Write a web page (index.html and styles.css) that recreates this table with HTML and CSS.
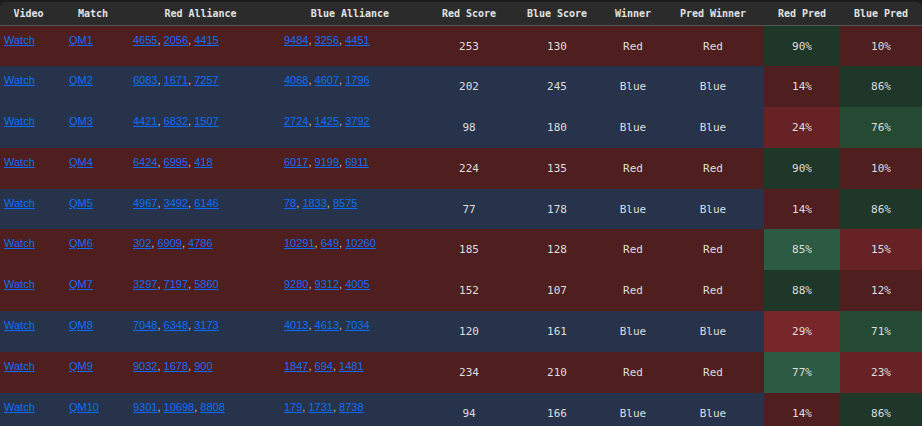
FILE: index.html
```html
<!DOCTYPE html>
<html>
<head>
<title>Match Results</title>
<link rel="stylesheet" href="styles.css">
</head>
<body>

<div class="table-wrap">
  <table class="matches">
    <colgroup>
      <col class="c-video"><col class="c-match"><col class="c-red"><col class="c-blue">
      <col class="c-rscore"><col class="c-bscore"><col class="c-winner"><col class="c-pwinner">
      <col class="c-rpred"><col class="c-bpred">
    </colgroup>
    <thead>
      <tr>
        <th class="lead">Video</th>
        <th class="lead">Match</th>
        <th class="lead">Red Alliance</th>
        <th class="lead">Blue Alliance</th>
        <th>Red Score</th>
        <th>Blue Score</th>
        <th>Winner</th>
        <th>Pred Winner</th>
        <th>Red Pred</th>
        <th>Blue Pred</th>
      </tr>
    </thead>
    <tbody>
      <tr class="red-row">
        <td class="link"><a href="#">Watch</a></td>
        <td class="link"><a href="#">QM1</a></td>
        <td class="link"><a href="#">4655</a>, <a href="#">2056</a>, <a href="#">4415</a></td>
        <td class="link"><a href="#">9484</a>, <a href="#">3256</a>, <a href="#">4451</a></td>
        <td>253</td><td>130</td><td>Red</td><td>Red</td>
        <td class="g1">90%</td><td class="r1">10%</td>
      </tr>
      <tr class="blue-row">
        <td class="link"><a href="#">Watch</a></td>
        <td class="link"><a href="#">QM2</a></td>
        <td class="link"><a href="#">6083</a>, <a href="#">1671</a>, <a href="#">7257</a></td>
        <td class="link"><a href="#">4068</a>, <a href="#">4607</a>, <a href="#">1796</a></td>
        <td>202</td><td>245</td><td>Blue</td><td>Blue</td>
        <td class="r1">14%</td><td class="g1">86%</td>
      </tr>
      <tr class="blue-row">
        <td class="link"><a href="#">Watch</a></td>
        <td class="link"><a href="#">QM3</a></td>
        <td class="link"><a href="#">4421</a>, <a href="#">6832</a>, <a href="#">1507</a></td>
        <td class="link"><a href="#">2724</a>, <a href="#">1425</a>, <a href="#">3792</a></td>
        <td>98</td><td>180</td><td>Blue</td><td>Blue</td>
        <td class="r2">24%</td><td class="g2">76%</td>
      </tr>
      <tr class="red-row">
        <td class="link"><a href="#">Watch</a></td>
        <td class="link"><a href="#">QM4</a></td>
        <td class="link"><a href="#">6424</a>, <a href="#">6995</a>, <a href="#">418</a></td>
        <td class="link"><a href="#">6017</a>, <a href="#">9199</a>, <a href="#">6911</a></td>
        <td>224</td><td>135</td><td>Red</td><td>Red</td>
        <td class="g1">90%</td><td class="r1">10%</td>
      </tr>
      <tr class="blue-row">
        <td class="link"><a href="#">Watch</a></td>
        <td class="link"><a href="#">QM5</a></td>
        <td class="link"><a href="#">4967</a>, <a href="#">3492</a>, <a href="#">6146</a></td>
        <td class="link"><a href="#">78</a>, <a href="#">1833</a>, <a href="#">8575</a></td>
        <td>77</td><td>178</td><td>Blue</td><td>Blue</td>
        <td class="r1">14%</td><td class="g1">86%</td>
      </tr>
      <tr class="red-row">
        <td class="link"><a href="#">Watch</a></td>
        <td class="link"><a href="#">QM6</a></td>
        <td class="link"><a href="#">302</a>, <a href="#">6909</a>, <a href="#">4786</a></td>
        <td class="link"><a href="#">10291</a>, <a href="#">649</a>, <a href="#">10260</a></td>
        <td>185</td><td>128</td><td>Red</td><td>Red</td>
        <td class="g3">85%</td><td class="r2">15%</td>
      </tr>
      <tr class="red-row">
        <td class="link"><a href="#">Watch</a></td>
        <td class="link"><a href="#">QM7</a></td>
        <td class="link"><a href="#">3297</a>, <a href="#">7197</a>, <a href="#">5860</a></td>
        <td class="link"><a href="#">9280</a>, <a href="#">9312</a>, <a href="#">4005</a></td>
        <td>152</td><td>107</td><td>Red</td><td>Red</td>
        <td class="g1">88%</td><td class="r1">12%</td>
      </tr>
      <tr class="blue-row">
        <td class="link"><a href="#">Watch</a></td>
        <td class="link"><a href="#">QM8</a></td>
        <td class="link"><a href="#">7048</a>, <a href="#">6348</a>, <a href="#">3173</a></td>
        <td class="link"><a href="#">4013</a>, <a href="#">4613</a>, <a href="#">7034</a></td>
        <td>120</td><td>161</td><td>Blue</td><td>Blue</td>
        <td class="r3">29%</td><td class="g2">71%</td>
      </tr>
      <tr class="red-row">
        <td class="link"><a href="#">Watch</a></td>
        <td class="link"><a href="#">QM9</a></td>
        <td class="link"><a href="#">9032</a>, <a href="#">1678</a>, <a href="#">900</a></td>
        <td class="link"><a href="#">1847</a>, <a href="#">694</a>, <a href="#">1481</a></td>
        <td>234</td><td>210</td><td>Red</td><td>Red</td>
        <td class="g3">77%</td><td class="r2">23%</td>
      </tr>
      <tr class="blue-row">
        <td class="link"><a href="#">Watch</a></td>
        <td class="link"><a href="#">QM10</a></td>
        <td class="link"><a href="#">9301</a>, <a href="#">10698</a>, <a href="#">8808</a></td>
        <td class="link"><a href="#">179</a>, <a href="#">1731</a>, <a href="#">8738</a></td>
        <td>94</td><td>166</td><td>Blue</td><td>Blue</td>
        <td class="r1">14%</td><td class="g1">86%</td>
      </tr>
    </tbody>
  </table>
</div>

</body>
</html>
```

FILE: styles.css
```css
body {
  margin: 0;
  padding: 2px 0 0 0;
  background-color: #1c1c1c;
  font-family: "DejaVu Sans Mono", monospace;
}

.table-wrap {
  border-radius: 6px 6px 0 0;
  overflow: hidden;
  background-color: #2b2b2b;
}

.matches {
  width: 922px;
  border-collapse: collapse;
  table-layout: fixed;
}

.c-video { width: 65px; }
.c-match { width: 64px; }
.c-red { width: 151px; }
.c-blue { width: 148px; }
.c-rscore { width: 82px; }
.c-bscore { width: 94px; }
.c-winner { width: 58px; }
.c-pwinner { width: 102px; }
.c-rpred { width: 76px; }
.c-bpred { width: 82px; }

.matches th {
  height: 23px;
  padding: 0 4px;
  font-size: 10px;
  font-weight: bold;
  color: #e2e2e2;
  text-align: center;
  white-space: nowrap;
  background-color: #2b2b2b;
  border-bottom: 1px solid #555;
}

.matches th.lead {
  padding-right: 12px;
}

.matches tbody tr {
  height: 40.8px;
}

.matches td {
  padding: 0 4px;
  font-size: 11px;
  color: #dedede;
  text-align: center;
  vertical-align: middle;
  white-space: nowrap;
}

.matches td.link {
  text-align: left;
  vertical-align: top;
  padding-top: 8px;
  font-family: "Liberation Sans", Arial, sans-serif;
  font-size: 11px;
  line-height: 13px;
  color: #c8c8c8;
}

.matches td.link a {
  color: #0d6efd;
  text-decoration: underline;
}

.red-row { background-color: #4f1e1f; }
.blue-row { background-color: #27334a; }

.g1 { background-color: #1e3729; }
.g2 { background-color: #244a33; }
.g3 { background-color: #2d5a42; }
.r1 { background-color: #4f1e1f; }
.r2 { background-color: #662224; }
.r3 { background-color: #77262a; }
```
